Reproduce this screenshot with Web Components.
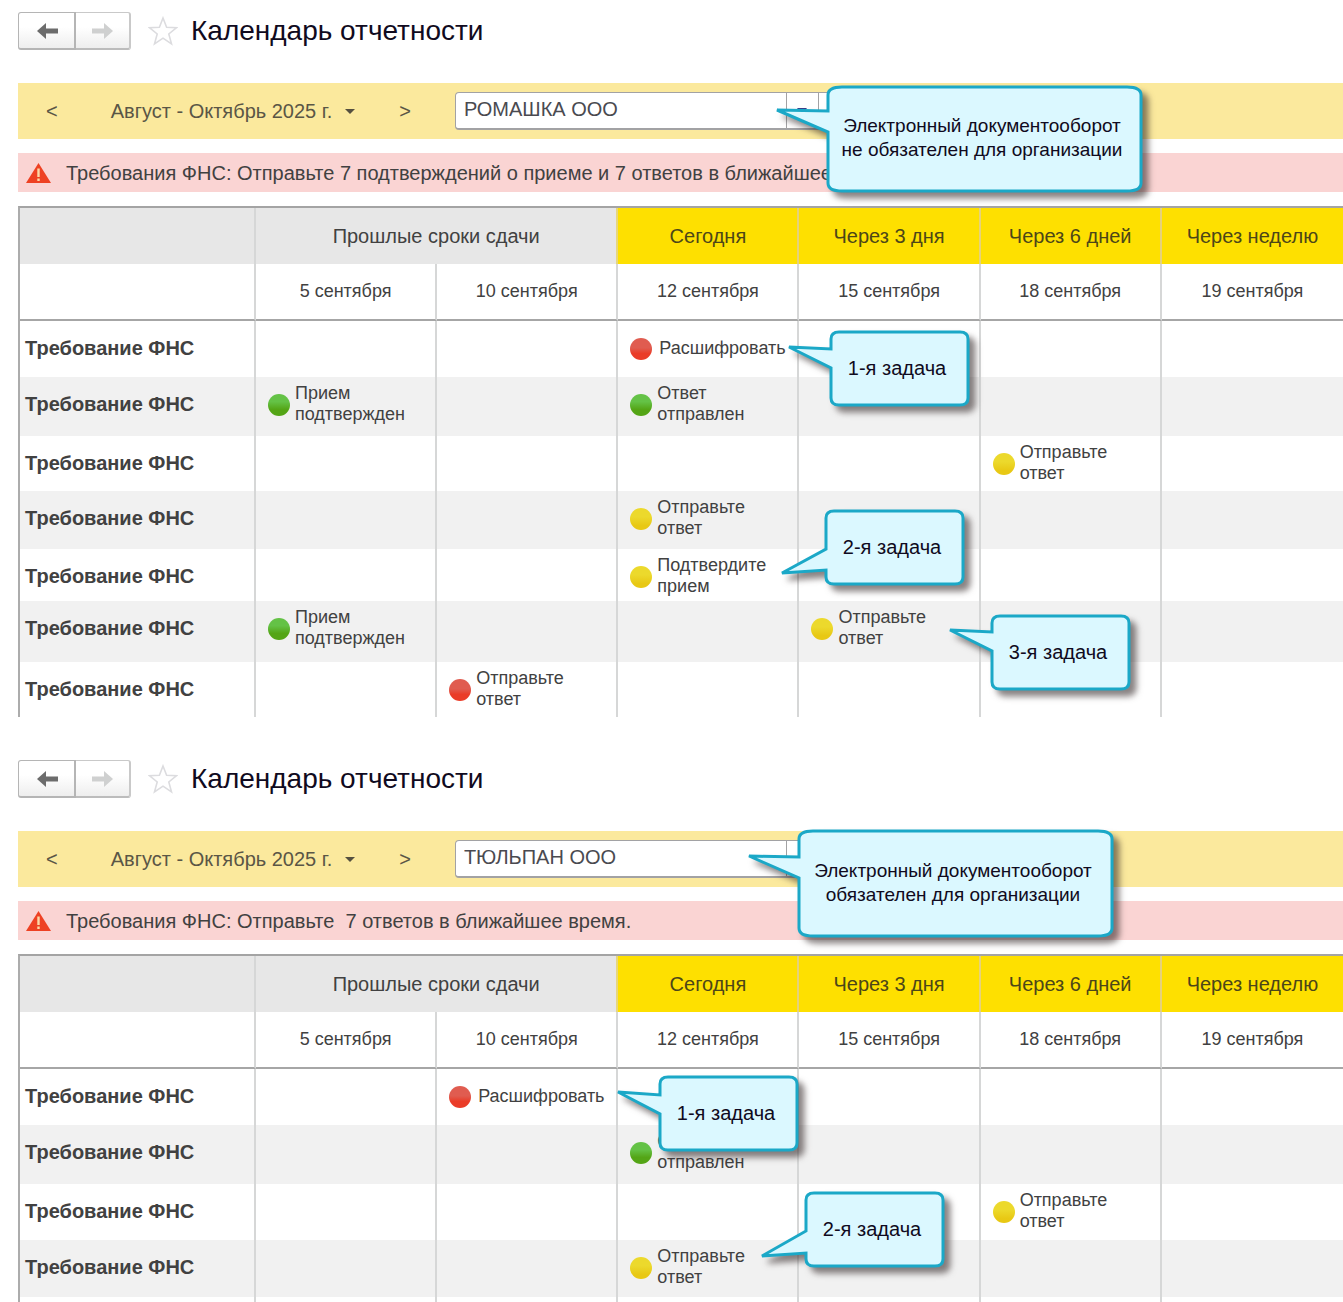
<!DOCTYPE html>
<html lang="ru">
<head>
<meta charset="utf-8">
<meta name="viewport" content="width=device-width, initial-scale=1">
<title>Календарь отчетности</title>
<style>
  html, body { margin: 0; background: #fff; }
  body {
    font-family: "Liberation Sans", Arial, sans-serif;
    color: #414141;
    display: flex;
    flex-direction: column;
    gap: 31px;
    height: 100vh;
    overflow: hidden;
  }
</style>
</head>
<body>

<report-calendar>
  <page-title>Календарь отчетности</page-title>
  <calendar-toolbar company="РОМАШКА ООО">Август - Октябрь 2025 г.</calendar-toolbar>
  <alert-bar>Требования ФНС: Отправьте 7 подтверждений о приеме и 7 ответов в ближайшее время.</alert-bar>
  <schedule-table data="first"></schedule-table>
  <call-out slot="notes" x="828" y="87" w="313" h="104" tip="-51,23" root="24,45" round="14,8" wide>Электронный документооборот<br>не обязателен для организации</call-out>
  <call-out slot="notes" x="831" y="332" w="137" h="73" tip="-42,15" root="17,36">1-я задача</call-out>
  <call-out slot="notes" x="826" y="511" w="137" h="73" tip="-44,62" root="38,59">2-я задача</call-out>
  <call-out slot="notes" x="992" y="616" w="137" h="73" tip="-42,14" root="16,35">3-я задача</call-out>
</report-calendar>

<report-calendar>
  <page-title>Календарь отчетности</page-title>
  <calendar-toolbar company="ТЮЛЬПАН ООО">Август - Октябрь 2025 г.</calendar-toolbar>
  <alert-bar>Требования ФНС: Отправьте&nbsp; 7 ответов в ближайшее время.</alert-bar>
  <schedule-table data="second"></schedule-table>
  <call-out slot="notes" x="799" y="83" w="313" h="105" tip="-50,25" root="26,47" round="14,8" wide>Электронный документооборот<br>обязателен для организации</call-out>
  <call-out slot="notes" x="660" y="329" w="137" h="73" tip="-42,15" root="18,37">1-я задача</call-out>
  <call-out slot="notes" x="806" y="445" w="137" h="73" tip="-44,63" root="38,60">2-я задача</call-out>
</report-calendar>

<script>
class BaseElement extends HTMLElement {
  connectedCallback() {
    if (this.shadowRoot) return;
    this.attachShadow({ mode: 'open' }).innerHTML = this.render();
  }
}

/* One calendar form: header, toolbar, alert, table, with notes floating over it. */
customElements.define('report-calendar', class extends BaseElement {
  render() {
    return `<style>
      :host { display: block; position: relative; flex: none; }
      main { display: flex; flex-direction: column; padding-left: 18px; gap: 14px; }
    </style>
    <main><slot></slot></main><slot name="notes"></slot>`;
  }
});

customElements.define('page-title', class extends BaseElement {
  render() {
    return `<style>
      :host { display: flex; align-items: center; height: 45px; padding: 8px 0 16px; }
      nav { display: flex; }
      button { font: inherit; box-sizing: border-box; width: 58px; height: 38px; padding: 2px 0 0 2px; display: flex; align-items: center; justify-content: center;
        border: 1px solid #c6c6c6; border-width: 1px 2px 2px 1px; border-color: #c9c9c9 #c9c9c9 #bcbcbc;
        background: linear-gradient(#fff 40%, #eee); }
      button:first-child { border-radius: 3px 0 0 3px; border-color: #b5b5b5; color: #6c6c6c; }
      button:last-child { border-left: 0; border-radius: 0 3px 3px 0; color: #cfd0d0; width: 55px; padding-left: 0; }
      .star { all: unset; display: flex; margin: 0 13px 0 17px; }
      h1 { margin: 0; font-size: 28px; line-height: 32px; font-weight: 400; color: #100a20; }
      svg { display: block; }
    </style>
    <nav>
      <button aria-label="Назад"><svg width="21" height="16" viewBox="0 0 21 16"><path fill="currentColor" d="M0 8 9 0v5.500h12v5H9V16z"/></svg></button>
      <button aria-label="Вперед" disabled><svg width="21" height="16" viewBox="0 0 21 16"><path fill="currentColor" d="M21 8 12 0v5.500H0v5h12V16z"/></svg></button>
    </nav>
    <button class="star" aria-label="В избранное"><svg width="30" height="30" viewBox="0 0 30 30"><path fill="#fff" stroke="#dcdcdf" stroke-width="1.600" d="M15 2l3.600 9.200 10 .5-7.800 6.300 2.700 9.800L15 22.200l-8.500 5.600 2.700-9.800L1.400 11.700l10-.5z"/></svg></button>
    <h1><slot></slot></h1>`;
  }
});

customElements.define('calendar-toolbar', class extends BaseElement {
  render() {
    return `<style>
      :host { display: flex; align-items: center; height: 56px; padding-left: 28px; background: #fbe99d; font-size: 20px; line-height: 24px; }
      button { font: inherit; color: #5a5646; background: none; border: 0; padding: 0; }
      .period { display: flex; align-items: center; gap: 13px; margin: 0 44px 0 53px; }
      .combo { display: flex; box-sizing: border-box; width: 404px; height: 38px; margin-left: 44px; background: #fff; border: 1px solid #a2a2a4; border-bottom-width: 2px; border-radius: 4px; }
      input { font: inherit; color: #4a4a50; flex: 1; min-width: 0; border: 0; outline: 0; background: none; padding: 0 8px 4px; }
      .combo button { width: 32px; border-left: 1px solid #a2a2a4; display: flex; align-items: center; justify-content: center; }
      .combo button:last-child { width: 40px; }
    </style>
    <button aria-label="Предыдущий период">&lt;</button>
    <button class="period"><slot></slot><svg width="10" height="6" viewBox="0 0 10 6"><path fill="#55503f" d="M0 1h10L5 6z"/></svg></button>
    <button aria-label="Следующий период">&gt;</button>
    <div class="combo">
      <input aria-label="Организация" value="${this.getAttribute('company')}">
      <button aria-label="Выбрать из списка"><svg width="10" height="6" viewBox="0 0 10 6"><path fill="#3b3f8c" d="M0 0h10L5 6z"/></svg></button>
      <button aria-label="Открыть"></button>
    </div>`;
  }
});

customElements.define('alert-bar', class extends BaseElement {
  render() {
    return `<style>
      :host { display: flex; align-items: center; gap: 15px; height: 39px; padding-left: 8px; background: #fad4d3; font-size: 20px; line-height: 24px; white-space: nowrap; }
      svg { flex: none; }
    </style>
    <svg width="25" height="20" viewBox="0 0 25 20"><path fill="#ee4123" d="M12.500 0 25 20H0z"/><path fill="none" stroke="#fbd9a8" stroke-width="2.400" d="M12.500 5.500v8.500M12.500 15.500v2.500"/></svg>
    <span role="alert"><slot></slot></span>`;
  }
});

customElements.define('task-state', class extends BaseElement {
  render() {
    return `<style>
      :host { display: flex; align-items: center; gap: 5px; height: 42px; padding: 6px 0 0 12px; font-size: 18px; line-height: 21px; }
      :host([single]) { gap: 7px; }
      i { flex: none; width: 22px; height: 22px; border-radius: 50%; margin-top: 2px; }
      :host([state="done"]) i { background: linear-gradient(#64c246 35%, #54a516 70%); }
      :host([state="late"]) i { background: linear-gradient(#e05c50 45%, #ea3c28 70%); }
      :host([state="todo"]) i { background: linear-gradient(#ecd92c 40%, #e8c814 80%); }
    </style><i></i><span><slot></slot></span>`;
  }
});

const task = (state, text) =>
  `<task-state state="${state}"${text.includes('<br>') ? '' : ' single'}>${text}</task-state>`;
const CONFIRMED = task('done', 'Прием<br>подтвержден');
const SENT = task('done', 'Ответ<br>отправлен');
const REPLY = task('todo', 'Отправьте<br>ответ');
const LATE_REPLY = task('late', 'Отправьте<br>ответ');
const DECODE = task('late', 'Расшифровать');
const CONFIRM = task('todo', 'Подтвердите<br>прием');

/* Each row: its height, then the tasks by column number. */
const SCHEDULES = {
  first: [
    [56, { 2: DECODE }],
    [59, { 0: CONFIRMED, 2: SENT }],
    [55, { 4: REPLY }],
    [58, { 2: REPLY }],
    [52, { 2: CONFIRM }],
    [61, { 0: CONFIRMED, 3: REPLY }],
    [55, { 1: LATE_REPLY }]
  ],
  second: [
    [56, { 1: DECODE }],
    [59, { 2: SENT }],
    [56, { 4: REPLY }],
    [57, { 2: REPLY }],
    [5, null]
  ]
};

customElements.define('schedule-table', class extends BaseElement {
  render() {
    const rows = SCHEDULES[this.getAttribute('data')].map(([height, tasks]) =>
      `<tr style="height:${height}px"><th scope="row">${tasks ? 'Требование ФНС' : ''}</th>` +
      [0, 1, 2, 3, 4, 5].map(c => `<td>${tasks && tasks[c] || ''}</td>`).join('') + '</tr>').join('');
    return `<style>
      :host { display: block; }
      table { table-layout: fixed; width: 100%; border-collapse: separate; border-spacing: 0; border-left: 2px solid #acacac; border-top: 2px solid #a4a4a4; }
      col:first-child { width: 236px; }
      th, td { box-sizing: border-box; padding: 0; font-weight: 400; border-right: 2px solid #d6d7d7; }
      tr > :last-child { border-right: 0; }
      thead th { text-align: center; vertical-align: middle; }
      .groups { height: 56px; font-size: 20px; background: #e7e7e7; }
      .groups .next { background: #fee000; color: #4c4618; border-color: #e6d27a; }
      .groups .past { border-right-color: #e7d77c; }
      .dates { height: 57px; font-size: 18px; }
      .dates th { border-bottom: 2px solid #a6a6a6; }
      tbody th { text-align: left; vertical-align: top; font-size: 20px; line-height: 22px; font-weight: 700; }
      tbody th:not(:empty) { padding: 16px 0 0 5px; }
      tbody td { vertical-align: top; }
      tbody tr:nth-child(even) { background: #f1f1f1; }
    </style>
    <table>
      <colgroup><col><col><col><col><col><col><col></colgroup>
      <thead>
        <tr class="groups"><th></th><th class="past" colspan="2">Прошлые сроки сдачи</th><th class="next">Сегодня</th><th class="next">Через 3 дня</th><th class="next">Через 6 дней</th><th class="next">Через неделю</th></tr>
        <tr class="dates"><th></th><th>5 сентября</th><th>10 сентября</th><th>12 сентября</th><th>15 сентября</th><th>18 сентября</th><th>19 сентября</th></tr>
      </thead>
      <tbody>${rows}</tbody>
    </table>`;
  }
});

/* Speech bubble: x, y place its box; tip and root shape the tail on its left side. */
customElements.define('call-out', class extends BaseElement {
  render() {
    const num = n => Number(this.getAttribute(n));
    const pair = (n, d) => (this.getAttribute(n) || d).split(',').map(Number);
    const w = num('w'), h = num('h');
    const [tx, ty] = pair('tip'), [r1, r2] = pair('root'), [rx, ry] = pair('round', '8,7');
    const d = `M0 ${r1}V${ry}Q0 0 ${rx} 0H${w - rx}Q${w} 0 ${w} ${ry}V${h - ry}Q${w} ${h} ${w - rx} ${h}H${rx}Q0 ${h} 0 ${h - ry}V${r2}L${tx} ${ty}Z`;
    return `<style>
      :host { position: absolute; left: ${num('x')}px; top: ${num('y')}px; width: ${w}px; height: ${h}px;
        display: flex; align-items: center; justify-content: center; text-align: center;
        font-size: 20px; line-height: 24px; color: #100a20; white-space: nowrap; }
      :host([wide]) { font-size: 19px; }
      svg { position: absolute; inset: 0; width: 100%; height: 100%; overflow: visible; filter: drop-shadow(6px 6px 3px rgba(40, 30, 30, .55)); }
      span { position: relative; padding: 0 5px 2px 0; }
    </style>
    <svg aria-hidden="true"><path d="${d}" fill="#dbf8ff" stroke="#1ba8c7" stroke-width="3"/></svg>
    <span><slot></slot></span>`;
  }
});
</script>
</body>
</html>
